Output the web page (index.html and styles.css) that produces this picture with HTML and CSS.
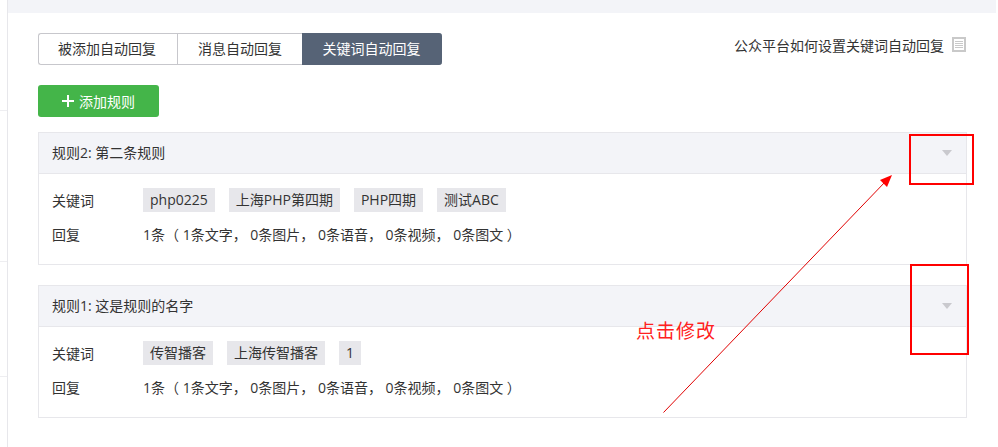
FILE: index.html
```html
<!DOCTYPE html>
<html lang="zh">
<head>
<meta charset="utf-8">
<title>关键词自动回复</title>
<link rel="stylesheet" href="styles.css">
</head>
<body>
<div class="page">
  <aside class="side"><i class="side-line l1"></i><i class="side-line l2"></i><i class="side-line l3"></i></aside>
  <main class="main">
    <div class="topband"></div>
    <div class="content">
      <div class="toolbar">
        <div class="tabs">
          <a class="tab tab-a">被添加自动回复</a>
          <a class="tab tab-b">消息自动回复</a>
          <a class="tab tab-c active">关键词自动回复</a>
        </div>
        <a class="help">公众平台如何设置关键词自动回复
          <svg class="doc" width="14" height="15" viewBox="0 0 14 15"><rect x="0" y="0" width="14" height="15" fill="#c9c9c9"/><rect x="2" y="2" width="10" height="11" fill="#fff"/><path d="M3 4.5h8M3 6.5h8M3 8.5h8M3 10.5h8" stroke="#c9c9c9" stroke-width="1"/></svg>
        </a>
      </div>
      <button class="add"><span class="plus"></span>添加规则</button>
      <section class="rule">
        <header class="rule-head"><span>规则2: 第二条规则</span><i class="caret"></i></header>
        <div class="rule-body">
          <div class="row"><span class="label">关键词</span><div class="tags"><span class="tag">php0225</span><span class="tag">上海PHP第四期</span><span class="tag">PHP四期</span><span class="tag">测试ABC</span></div></div>
          <div class="row reply"><span class="label">回复</span><span>1条（ 1条文字， 0条图片， 0条语音， 0条视频， 0条图文 ）</span></div>
        </div>
      </section>
      <section class="rule">
        <header class="rule-head"><span>规则1: 这是规则的名字</span><i class="caret"></i></header>
        <div class="rule-body">
          <div class="row"><span class="label">关键词</span><div class="tags"><span class="tag">传智播客</span><span class="tag">上海传智播客</span><span class="tag">1</span></div></div>
          <div class="row reply"><span class="label">回复</span><span>1条（ 1条文字， 0条图片， 0条语音， 0条视频， 0条图文 ）</span></div>
        </div>
      </section>
    </div>
  </main>
</div>
<svg class="marks" width="998" height="447" viewBox="0 0 998 447">
  <rect x="910" y="135" width="63" height="49" fill="none" stroke="#ff0000" stroke-width="2"/>
  <rect x="911" y="265" width="57" height="89" fill="none" stroke="#ff0000" stroke-width="2"/>
  <line x1="663.5" y1="412.5" x2="886" y2="181" stroke="#e00000" stroke-width="1"/>
  <polygon points="892,175 880,180 887,187" fill="#ff0000"/>
</svg>
<span class="note">点击修改</span>
</body>
</html>
```
FILE: styles.css
```css
* { box-sizing: border-box; }
html, body { margin: 0; height: 447px; overflow: hidden; background: #fff; }
body { font-family: "Open Sans", "Noto Sans CJK SC", "Liberation Sans", sans-serif; font-size: 14px; color: #333; position: relative; }
.page { display: flex; height: 447px; }
.side { position: relative; width: 8px; border-right: 1px solid #e7e7eb; flex: none; }
.side-line { position: absolute; left: 0; right: 0; height: 1px; background: #eeeef1; }
.l1 { top: 110px; }
.l2 { top: 261px; }
.l3 { top: 376px; }
.main { flex: 1; padding-right: 2px; }
.topband { height: 13px; background: #f3f4f8; }
.content { padding: 20px 29px 0 30px; }
.toolbar { display: flex; justify-content: space-between; align-items: flex-start; }
.tabs { display: flex; height: 32px; }
.tab { display: flex; align-items: center; justify-content: center; height: 32px; border: 1px solid #c7c7cc; border-right: 0; font-size: 14px; line-height: 20px; color: #333; }
.tab-a { width: 139px; padding-right: 2px; border-radius: 3px 0 0 3px; }
.tab-b { width: 125px; }
.tab-c { width: 140px; padding-right: 2px; }
.tab.active { background: #566376; border-color: #566376; color: #fff; border-radius: 0 3px 3px 0; }
.help { display: flex; align-items: center; gap: 8px; height: 15px; margin-top: 4px; margin-right: 1px; font-size: 14px; color: #333; }
.doc { flex: none; }
.add { display: flex; align-items: center; justify-content: center; width: 121px; height: 32px; margin-top: 20px; border: 0; border-radius: 3px; background: #44b549; color: #fff; font: inherit; font-size: 14px; padding: 0; }
.plus { position: relative; width: 12px; height: 12px; margin-right: 5px; background: linear-gradient(#fff,#fff) center/12px 2px no-repeat, linear-gradient(#fff,#fff) center/2px 12px no-repeat; }
.rule { border: 1px solid #e7e7eb; margin-top: 15px; height: 133px; }
.rule + .rule { margin-top: 20px; }
.rule-head { display: flex; justify-content: space-between; align-items: center; height: 41px; padding: 0 14px 0 13px; background: #f3f4f8; border-bottom: 1px solid #e7e7eb; font-size: 14px; line-height: 20px; }
.caret { width: 0; height: 0; border: 5px solid transparent; border-top: 6px solid #c9c9ce; border-bottom: 0; }
.rule-body { padding: 14px 14px 0 13px; font-size: 14px; line-height: 20px; }
.row { display: flex; }
.reply { margin-top: 13px; }
.label { width: 91px; flex: none; padding-top: 3px; }
.reply .label { padding-top: 0; }
.tags { display: flex; gap: 14px; }
.tag { display: block; height: 24px; padding: 0 7px; background: #e7e7eb; line-height: 24px; font-size: 14px; }
.marks { position: absolute; left: 0; top: 0; pointer-events: none; }
.note { position: absolute; left: 636px; top: 319px; color: #ff2020; font-size: 19px; line-height: 24px; letter-spacing: 1px; }
```
